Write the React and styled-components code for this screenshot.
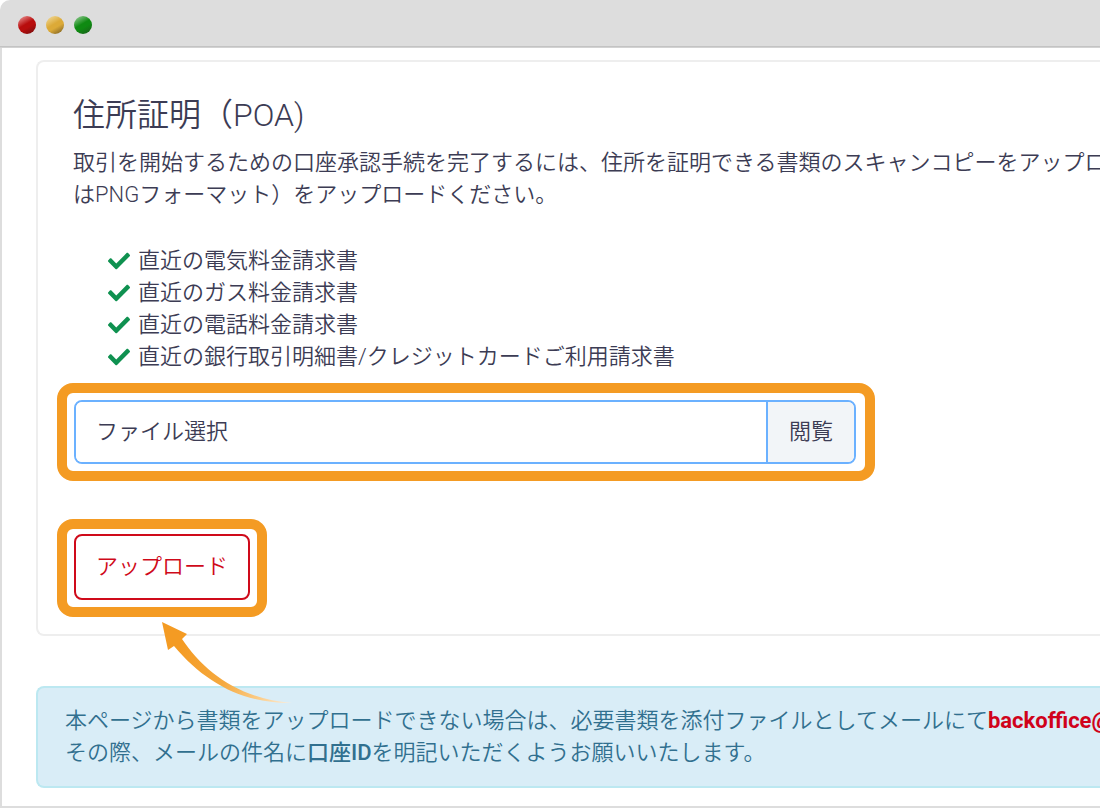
import React, { useRef, useState } from "react";
import styled, { createGlobalStyle } from "styled-components";
import { FaCheck } from "react-icons/fa";

const documents = [
  "直近の電気料金請求書",
  "直近のガス料金請求書",
  "直近の電話料金請求書",
  "直近の銀行取引明細書/クレジットカードご利用請求書",
];

const App = () => {
  const fileRef = useRef();
  const [fileName, setFileName] = useState("ファイル選択");

  const handleChange = (e) => {
    if (e.target.files.length) {
      setFileName(e.target.files[0].name);
    }
  };

  return (
    <>
      <GlobalStyle />
      <Browser>
        <TitleBar>
          <Light $from="#f0a5a5" $color="#b80d0d" $to="#6b0f0f" />
          <Light $from="#f3dfa6" $color="#dcaa38" $to="#6e5620" />
          <Light $from="#a3d3a3" $color="#0f8a12" $to="#1d5a1d" />
        </TitleBar>
        <Page>
          <Card>
            <Intro>
              <h1>住所証明（POA)</h1>
              <p>
                取引を開始するための口座承認手続を完了するには、住所を証明できる書類のスキャンコピーをアップロー
                <br />
                はPNGフォーマット）をアップロードください。
              </p>
              <DocumentList>
                {documents.map((item) => (
                  <li key={item}>
                    <FaCheck aria-hidden="true" />
                    {item}
                  </li>
                ))}
              </DocumentList>
            </Intro>
            <Highlight $wide>
              <FileGroup>
                <FileName
                  type="text"
                  readOnly
                  value={fileName}
                  aria-label="ファイル選択"
                />
                <BrowseButton
                  type="button"
                  onClick={() => fileRef.current.click()}
                >
                  閲覧
                </BrowseButton>
                <input ref={fileRef} type="file" hidden onChange={handleChange} />
              </FileGroup>
            </Highlight>
            <Highlight>
              <UploadButton type="button">アップロード</UploadButton>
              <Arrow viewBox="0 0 132 84" aria-hidden="true">
                <defs>
                  <linearGradient
                    id="arrowFade"
                    gradientUnits="userSpaceOnUse"
                    x1="20"
                    y1="20"
                    x2="128"
                    y2="82"
                  >
                    <stop offset="0" stopColor="#f49b23" />
                    <stop offset="0.45" stopColor="#f5a93f" />
                    <stop offset="0.75" stopColor="#fbcb85" />
                    <stop offset="1" stopColor="#fdeedb" />
                  </linearGradient>
                </defs>
                <path
                  d="M0 0 L25 12 L20 17 C42 50 78 77 130 81 C82 82 43 61 12 24 L6 28 Z"
                  fill="url(#arrowFade)"
                />
              </Arrow>
            </Highlight>
          </Card>
          <Notice>
            本ページから書類をアップロードできない場合は、必要書類を添付ファイルとしてメールにて
            <a href="mailto:backoffice@">backoffice@</a>
            <br />
            その際、メールの件名に<strong>口座ID</strong>
            を明記いただくようお願いいたします。
          </Notice>
        </Page>
      </Browser>
    </>
  );
};

const GlobalStyle = createGlobalStyle`
  * {
    box-sizing: border-box;
  }
  body {
    margin: 0;
    background: #fff;
    color: #3c3c54;
    font-family: Roboto, "Noto Sans CJK JP", sans-serif;
    font-size: 22px;
    font-weight: 350;
    line-height: 32px;
  }
  button, input {
    font: inherit;
    color: inherit;
  }
`;

const Browser = styled.div`
  overflow: hidden;
  border-radius: 10px 0 0 0;
`;

const TitleBar = styled.header`
  display: flex;
  align-items: center;
  gap: 10px;
  height: 48px;
  padding: 2px 18px 0;
  background: #ddd;
  border-bottom: 1px solid #d2d2d2;
  box-shadow: inset 0 -1px #c3c3c3;
`;

const Light = styled.span`
  width: 18px;
  height: 18px;
  border-radius: 50%;
  background: linear-gradient(
    150deg,
    ${(p) => p.$from},
    ${(p) => p.$color} 45%,
    ${(p) => p.$color} 60%,
    ${(p) => p.$to}
  );
`;

const Page = styled.main`
  padding: 12px 0 18px 34px;
  border-left: 2px solid #ddd;
  border-bottom: 2px solid #ddd;
`;

const Card = styled.section`
  padding: 34px 0 17px 19px;
  border: 2px solid #eee;
  border-right: 0;
  border-radius: 8px 0 0 8px;
`;

const Intro = styled.div`
  padding: 0 0 10px 16px;
  overflow: hidden;
  white-space: nowrap;
  h1 {
    margin: 0 0 13px;
    font-size: 32px;
    font-weight: 350;
    line-height: 38px;
  }
  p {
    margin: 0 0 34px;
  }
`;

const DocumentList = styled.ul`
  margin: 0;
  padding: 0 0 0 35px;
  list-style: none;
  li {
    display: flex;
    align-items: center;
    gap: 8px;
  }
  svg {
    width: 22px;
    height: 22px;
    color: #0f9150;
  }
`;

const Highlight = styled.div`
  position: relative;
  width: ${(p) => (p.$wide ? "auto" : "fit-content")};
  max-width: 818px;
  padding: ${(p) => (p.$wide ? "7px 9px 7px 7px" : "5px 7px 7px")};
  border: 10px solid #f49b23;
  border-radius: 16px;
  & + & {
    margin-top: 38px;
  }
`;

const FileGroup = styled.div`
  display: flex;
  height: 64px;
  border: 2px solid #6bb1ff;
  border-radius: 8px;
  overflow: hidden;
`;

const FileName = styled.input`
  flex: 1;
  min-width: 0;
  padding: 0 20px;
  border: 0;
  outline: 0;
  background: #fff;
`;

const BrowseButton = styled.button`
  padding: 0 21px;
  border: 0;
  border-left: 2px solid #6bb1ff;
  background: #f2f5f8;
  cursor: pointer;
`;

const UploadButton = styled.button`
  display: block;
  height: 66px;
  padding: 0 20px;
  border: 2px solid #cf0a1a;
  border-radius: 8px;
  background: #fff;
  color: #cf0a1a;
  cursor: pointer;
`;

const Arrow = styled.svg`
  position: absolute;
  top: 93px;
  left: 95px;
  z-index: 1;
  width: 132px;
  height: 84px;
`;

const Notice = styled.section`
  margin-top: 50px;
  padding: 17px 0 17px 27px;
  border: 2px solid #bce8f1;
  border-right: 0;
  border-radius: 8px 0 0 8px;
  background: #d9edf7;
  color: #31708f;
  overflow: hidden;
  white-space: nowrap;
  a {
    color: #d0021b;
    font-weight: 700;
    text-decoration: none;
  }
  strong {
    font-weight: 500;
  }
`;

export default App;
